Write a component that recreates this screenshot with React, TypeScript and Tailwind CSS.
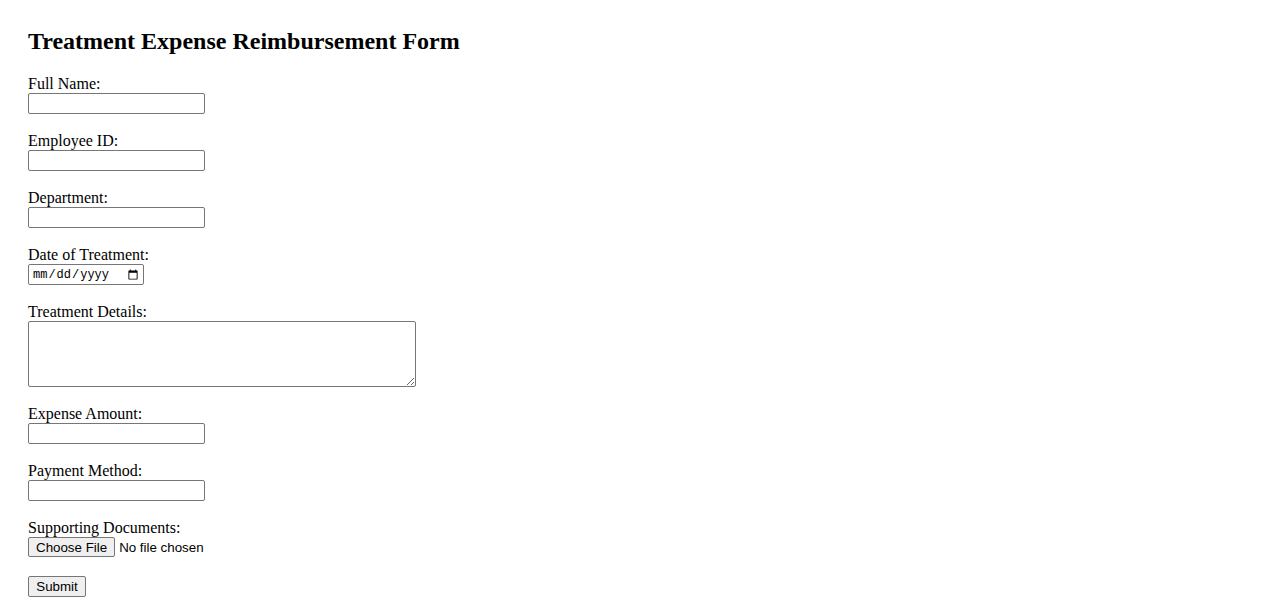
import React from "react";

const inputCls =
  "block w-[177px] h-[21px] border border-[#767676] rounded-[2px] bg-white px-[2px] text-[13.33px] font-['Liberation_Sans',sans-serif] outline-none";

function Field({ label, children, last }: { label: string; children: React.ReactNode; last?: boolean }) {
  return (
    <div className={last ? "mb-[18px]" : "mb-[17px]"}>
      <label className="block h-[19px] leading-[19px] text-[16px]">{label}</label>
      {children}
    </div>
  );
}

export default function App() {
  return (
    <div className="min-h-screen bg-white text-black font-['Liberation_Serif',serif] pt-[27px] pl-[28px]">
      <h2 className="text-[24px] font-bold leading-[28px] mb-[19px]">
        Treatment Expense Reimbursement Form
      </h2>
      <form onSubmit={(e) => e.preventDefault()}>
        <Field label="Full Name:">
          <input type="text" className={inputCls} />
        </Field>
        <Field label="Employee ID:">
          <input type="text" className={inputCls} />
        </Field>
        <Field label="Department:">
          <input type="text" className={inputCls} />
        </Field>
        <Field label="Date of Treatment:">
          <input
            type="date"
            className="block w-[116px] h-[21px] border border-[#767676] rounded-[2px] bg-white pl-[3px] pr-[2px] text-[12px] font-['Liberation_Mono',monospace]"
          />
        </Field>
        <Field label="Treatment Details:">
          <textarea className="block w-[388px] h-[66px] border border-[#767676] rounded-[2px] bg-white p-[2px] text-[13.33px] font-['Liberation_Mono',monospace] resize" />
        </Field>
        <Field label="Expense Amount:">
          <input type="text" className={inputCls} />
        </Field>
        <Field label="Payment Method:">
          <input type="text" className={inputCls} />
        </Field>
        <Field label="Supporting Documents:" last>
          <input
            type="file"
            className="block h-[21px] text-[13.33px] font-['Liberation_Sans',sans-serif] file:h-[20px] file:border file:border-[#767676] file:rounded-[2px] file:bg-[#efefef] file:px-[7px] file:mr-[4px] file:text-[13.33px] file:font-['Liberation_Sans',sans-serif] file:text-black"
          />
        </Field>
        <button
          type="submit"
          className="block h-[21px] w-[58px] border border-[#767676] rounded-[2px] bg-[#efefef] text-[13.33px] font-['Liberation_Sans',sans-serif]"
        >
          Submit
        </button>
      </form>
    </div>
  );
}
